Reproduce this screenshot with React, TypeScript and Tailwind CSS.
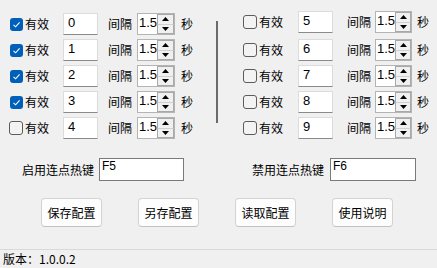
import React from 'react';

const font = { fontFamily: '"Noto Sans CJK SC", "Liberation Sans", sans-serif' };

const Check: React.FC<{ checked: boolean }> = ({ checked }) =>
  checked ? (
    <div className="w-[13px] h-[13px] rounded-[3px] bg-[#005fb8] flex items-center justify-center shrink-0">
      <svg width="9" height="9" viewBox="0 0 9 9">
        <path d="M1.5 4.8 L3.6 6.8 L7.6 2.3" fill="none" stroke="#ffffff" strokeWidth="1.1" />
      </svg>
    </div>
  ) : (
    <div className="w-[14px] h-[14px] rounded-[3px] border border-[#5c5c5c] bg-[#f3f3f3] shrink-0" />
  );

const Spinner: React.FC<{ w: string }> = ({ w }) => (
  <div className={`${w} h-[22px] flex border border-[#b4b4b4] bg-white shrink-0`}>
    <div className="flex-1 text-[13px] leading-[18px] pl-[1px] text-black" style={{ fontFamily: '"Liberation Sans", sans-serif' }}>
      1.5
    </div>
    <div className="w-[17px] flex flex-col">
      <div className="flex-1 bg-[#f0f0f0] border border-[#a8a8a8] border-b-[#d0d0d0] flex items-center justify-center">
        <svg width="7" height="4" viewBox="0 0 7 4"><path d="M0 4 L3.5 0 L7 4 Z" fill="#000" /></svg>
      </div>
      <div className="flex-1 bg-[#f0f0f0] border border-t-0 border-[#a8a8a8] flex items-center justify-center">
        <svg width="7" height="4" viewBox="0 0 7 4"><path d="M0 0 L3.5 4 L7 0 Z" fill="#000" /></svg>
      </div>
    </div>
  </div>
);

const Row: React.FC<{ idx: number; checked: boolean; side: 'l' | 'r'; extra?: string }> = ({ idx, checked, side, extra = '' }) => {
  const l = side === 'l';
  return (
    <div className={`flex items-center h-[22px] text-[12px] text-black ${extra}`}>
      <Check checked={checked} />
      <span className="ml-[2px] w-[24px] leading-none">有效</span>
      <div
        className={`${l ? 'ml-[14px]' : 'ml-[15px]'} w-[35px] h-[22px] bg-white border border-[#dcdcdc] border-b-[#8a8a8a] text-[13px] leading-[18px] pl-[4px]`}
        style={{ fontFamily: '"Liberation Sans", sans-serif' }}
      >
        {idx}
      </div>
      <span className={`${l ? 'ml-[10px]' : 'ml-[14px]'} w-[24px] leading-none`}>间隔</span>
      <div className={l ? 'ml-[5px]' : 'ml-[4px]'}>
        <Spinner w={l ? 'w-[38px]' : 'w-[37px]'} />
      </div>
      <span className={`${l ? 'ml-[6px]' : 'ml-[5px]'} leading-none`}>秒</span>
    </div>
  );
};

const Btn: React.FC<{ label: string }> = ({ label }) => (
  <button className="w-[61px] h-[29px] rounded-[4px] bg-[#fdfdfd] border border-[#d3d3d3] border-b-[#c2c2c2] text-[12px] text-black leading-none">
    {label}
  </button>
);

export default function App() {
  return (
    <div className="w-[437px] h-[268px] bg-[#f0f0f0] flex flex-col overflow-hidden" style={font}>
      <div className="flex pt-[13px]">
        <div className="ml-[10px] w-[186px] flex flex-col gap-[4px]">
          <Row idx={0} checked side="l" />
          <Row idx={1} checked side="l" />
          <Row idx={2} checked side="l" />
          <Row idx={3} checked side="l" />
          <Row idx={4} checked={false} side="l" extra="-ml-[1px]" />
        </div>
        <div className="ml-[20px] mt-[8px] w-[2px] h-[102px] bg-[#6b6b6b]" />
        <div className="ml-[25px] flex flex-col gap-[4px]">
          <Row idx={5} checked={false} side="r" extra="-mt-[2px] mb-[2px]" />
          <Row idx={6} checked={false} side="r" />
          <Row idx={7} checked={false} side="r" />
          <Row idx={8} checked={false} side="r" />
          <Row idx={9} checked={false} side="r" />
        </div>
      </div>

      <div className="flex items-center mt-[19px] pl-[22px] text-[12px] text-black">
        <span className="w-[72px] leading-none">启用连点热键</span>
        <div
          className="ml-[5px] w-[85px] h-[23px] bg-white border border-[#7a7a7a] text-[12px] leading-[14px] pl-[2px]"
          style={{ fontFamily: '"Liberation Sans", sans-serif' }}
        >
          F5
        </div>
        <span className="ml-[68px] w-[72px] leading-none">禁用连点热键</span>
        <div
          className="ml-[6px] w-[86px] h-[23px] bg-white border border-[#7a7a7a] text-[12px] leading-[14px] pl-[2px]"
          style={{ fontFamily: '"Liberation Sans", sans-serif' }}
        >
          F6
        </div>
      </div>

      <div className="flex mt-[17px] pl-[41px] gap-[36px]">
        <Btn label="保存配置" />
        <Btn label="另存配置" />
        <Btn label="读取配置" />
        <Btn label="使用说明" />
      </div>

      <div className="mt-auto h-[19px] border-t border-[#d9d9d9] flex items-center pl-[3px] text-[12px] text-black">
        <span className="leading-none">版本：1.0.0.2</span>
      </div>
    </div>
  );
}
